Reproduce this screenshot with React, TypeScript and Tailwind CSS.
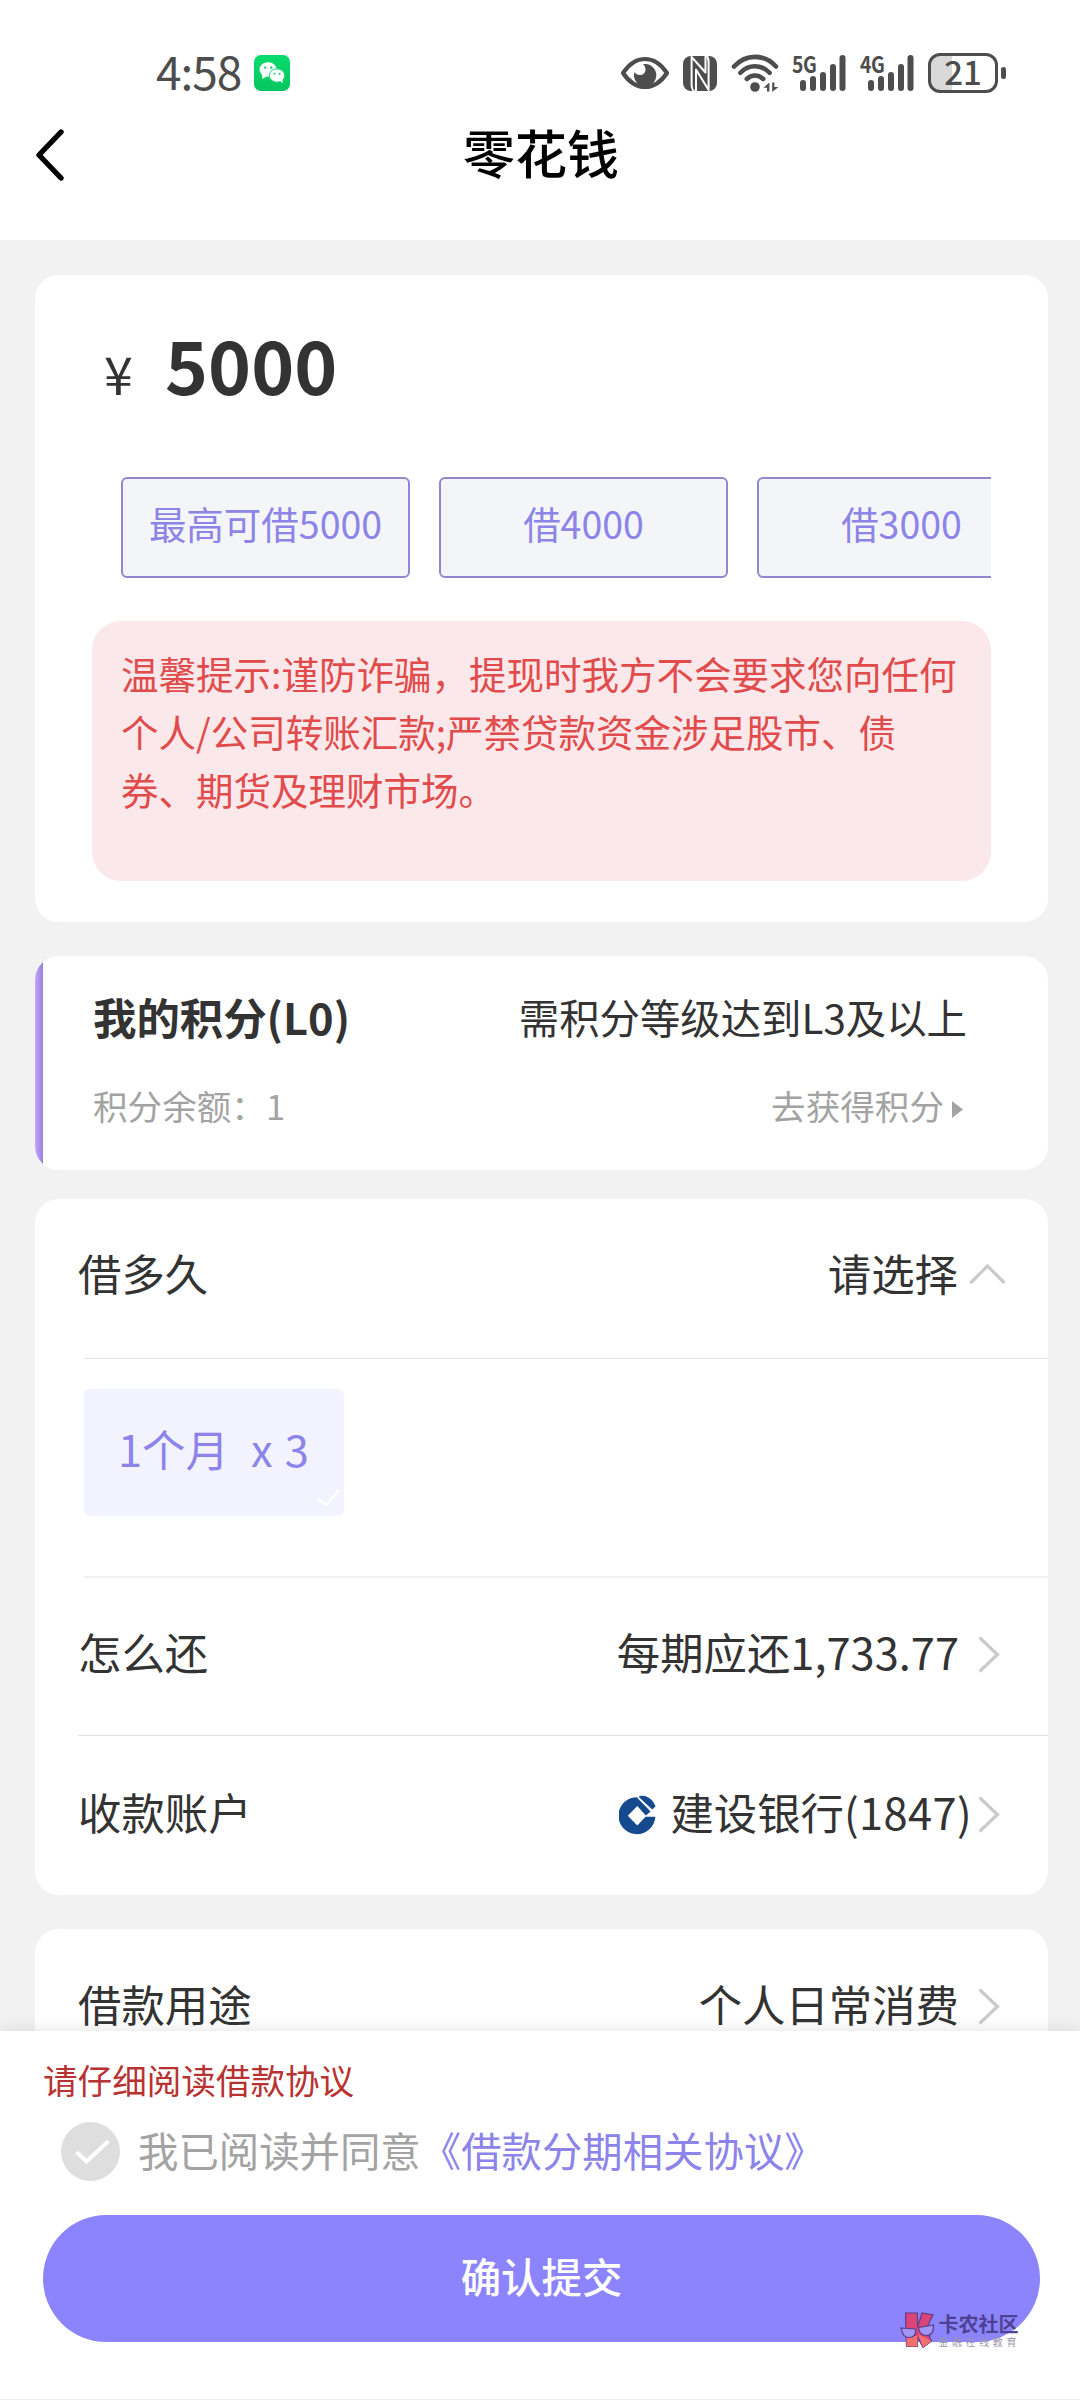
import type { ReactNode } from "react";

type RowProps = {
  label: string;
  children: ReactNode;
};

const amounts = ["最高可借5000", "借4000", "借3000"];

const signals = [
  { name: "5G", id: "sim1" },
  { name: "4G", id: "sim2" },
];

function WechatIcon() {
  return (
    <svg className="h-9 w-9" viewBox="0 0 36 36">
      <defs>
        <linearGradient id="wechat" x1="0" x2="0" y1="0" y2="1">
          <stop offset="0" stopColor="#06dc6c" />
          <stop offset="1" stopColor="#06c560" />
        </linearGradient>
      </defs>
      <rect fill="url(#wechat)" height="36" rx="7" width="36" />
      <path d="M8 19 L8.5 24 L13 21 Z" fill="#fff" />
      <ellipse cx="14" cy="14.5" fill="#fff" rx="8.5" ry="7.3" />
      <ellipse cx="23" cy="20.5" fill="#fff" rx="7.8" ry="6.7" stroke="#06d066" strokeWidth="0.9" />
      <path d="M25 25 L28.6 28.3 L28.4 23.5 Z" fill="#fff" />
      <circle cx="11.2" cy="12.6" fill="#06d066" r="1.2" />
      <circle cx="17.2" cy="12.6" fill="#06d066" r="1.2" />
      <circle cx="20.4" cy="18.8" fill="#06d066" r="1" />
      <circle cx="25.6" cy="18.8" fill="#06d066" r="1" />
    </svg>
  );
}

function EyeIcon() {
  return (
    <svg className="h-[34px] w-12" viewBox="0 0 48 34">
      <path
        d="M2 17 C8 8 15 3 24 3 C33 3 40 8 46 17 C40 26 33 31 24 31 C15 31 8 26 2 17 Z"
        fill="none"
        stroke="#4d4d4d"
        strokeLinejoin="round"
        strokeWidth="4.2"
      />
      <path
        d="M22 8.2 A11.2 11.2 0 1 1 13.4 16 C15 18.5 18.5 20 21.6 18.4 C25.5 16.4 25.4 11 22 8.2 Z"
        fill="#4d4d4d"
      />
    </svg>
  );
}

function NfcIcon() {
  return (
    <svg className="h-[35px] w-[34px]" viewBox="0 0 34 35">
      <rect fill="#4d4d4d" height="35" rx="8" width="34" />
      <g fill="none" stroke="#fff" strokeLinejoin="round" strokeWidth="2">
        <path d="M12 36 Q8.6 34 8.6 29 V1 L22.5 16.5 V-1" />
        <path d="M23 -1 Q25.6 1 25.6 6 V34 L13 13.5 V36" />
      </g>
    </svg>
  );
}

function WifiIcon() {
  return (
    <svg className="h-[38px] w-12" viewBox="0 0 48 38">
      <g fill="none" stroke="#4d4d4d" strokeLinecap="round" strokeWidth="4.6">
        <path d="M3 12.5 C15 -0.4 33 -0.4 45 12.5" />
        <path d="M9.4 18.8 C17.5 10 30.5 10 38.6 18.8" />
        <path d="M15.8 25 C20.5 20.4 27.5 20.4 32.2 25" />
      </g>
      <circle cx="24" cy="33" fill="#4d4d4d" r="4.8" />
      <path d="M32.5 33.8 L38.4 28.5 V37.5 H36 V33.8 Z M47.5 33 L41.2 38 V28.5 H43.4 V33 Z" fill="#4d4d4d" />
    </svg>
  );
}

function SignalIcon({ name }: { name: string }) {
  return (
    <div className="relative h-[38px] w-[54px]">
      <svg className="h-[38px] w-[54px]" viewBox="0 0 54 38">
        <g fill="#4d4d4d">
          <rect height="11" rx="3" width="6" x="8" y="26" />
          <rect height="15" rx="3" width="6" x="18" y="22" />
          <rect height="19" rx="3" width="6" x="28" y="18" />
          <rect height="27" rx="3" width="6" x="38" y="10" />
          <rect height="36" rx="3" width="6" x="47.5" y="1" />
        </g>
      </svg>
      <span className="absolute -top-[3px] left-0 origin-left scale-x-[0.84] text-[23px] leading-6 font-bold tracking-[-0.5px]">
        {name}
      </span>
    </div>
  );
}

function BatteryIcon() {
  return (
    <div className="flex items-center gap-[3px]">
      <div className="flex h-10 w-[70px] items-center justify-center rounded-xl border-[3px] border-[#4d4d4d] bg-linear-to-r from-[#d9d9d9] from-33% to-white to-33% text-[33px] leading-none font-medium">
        <span className="-mt-1">21</span>
      </div>
      <div className="h-3 w-[5px] rounded-full bg-[#4d4d4d]" />
    </div>
  );
}

function BankLogo() {
  return (
    <svg className="h-10 w-[37px]" viewBox="0 0 37 40">
      <path
        d="M36.4 21.8 A18.5 18.5 0 1 1 19.5 2.2 L31.6 16.4 L26.8 20.4 L18.3 11 L8.8 20.7 L18.3 30.4 L26.6 21.8 Z"
        fill="#154a8f"
      />
      <path d="M19.2 2 Q21 0.4 26 1 Q33 3 36.6 11.2 L33.4 14.6 Z" fill="#154a8f" />
      <path d="M18.8 2.2 L32.8 16.4" stroke="#fff" strokeWidth="1.8" />
    </svg>
  );
}

function ChevronRight() {
  return (
    <svg className="h-[37px] w-[22px]" viewBox="0 0 22 37">
      <path d="M1.5 1.5 L19.5 18.5 L1.5 35.5" fill="none" stroke="#cbcbcb" strokeWidth="3.2" />
    </svg>
  );
}

function Row({ label, children }: RowProps) {
  return (
    <div className="flex flex-1 items-center justify-between pr-12 pl-[43px] text-[43.4px] leading-none">
      <span className="pb-1.5">{label}</span>
      <div className="flex items-center">{children}</div>
    </div>
  );
}

function StatusBar() {
  return (
    <div className="flex h-[98px] items-start justify-between pt-[53px] pr-[74px] pl-[156px] text-[#4d4d4d]">
      <div className="flex h-10 items-center">
        <span className="w-[98px] pb-1.5 text-[46px] leading-none tracking-[-1px]">4:58</span>
        <WechatIcon />
      </div>
      <div className="flex h-10 items-center">
        <EyeIcon />
        <div className="ml-[14px] flex items-center">
          <NfcIcon />
        </div>
        <div className="ml-[14px] flex items-center">
          <WifiIcon />
        </div>
        <div className="ml-[13px] flex gap-[14px]">
          {signals.map((signal) => (
            <SignalIcon key={signal.id} name={signal.name} />
          ))}
        </div>
        <div className="ml-[14px]">
          <BatteryIcon />
        </div>
      </div>
    </div>
  );
}

function AmountCard() {
  return (
    <section className="h-[647px] rounded-3xl bg-white pr-[57px] pl-[57px]">
      <div className="flex h-[202px] items-baseline pt-[52px] pl-3">
        <span className="w-[61px] text-[52px] leading-none">¥</span>
        <span className="text-[73px] leading-none font-bold">5000</span>
      </div>
      <div className="flex gap-[29px] overflow-hidden pl-[29px]">
        {amounts.map((amount) => (
          <button
            className="h-[101px] w-[289px] shrink-0 rounded-md border-2 border-[#8f88cf] bg-[#f4f5f9] pb-2.5 text-[37.5px] leading-none text-[#8c84e6]"
            key={amount}
            type="button"
          >
            {amount}
          </button>
        ))}
      </div>
      <div className="mt-[43px] h-[260px] rounded-[29px] bg-[#fbe8ea] pt-[23px] pl-[29px] text-[37.5px] leading-[58px] whitespace-nowrap text-[#e14b4b]">
        温馨提示:谨防诈骗，提现时我方不会要求您向任何
        <br />
        个人/公司转账汇款;严禁贷款资金涉足股市、债
        <br />
        券、期货及理财市场。
      </div>
    </section>
  );
}

function PointsCard() {
  return (
    <section className="mt-[34px] flex h-[214px] overflow-hidden rounded-3xl bg-white">
      <div className="w-2 bg-linear-to-r from-[#c8a5fa] to-[#9580dd]" />
      <div className="flex flex-1 flex-col pt-[33px] pr-[81px] pl-[50px]">
        <div className="flex h-14 items-center justify-between leading-none">
          <span className="text-[43.4px] font-bold">我的积分(L0)</span>
          <span className="text-[40.4px]">需积分等级达到L3及以上</span>
        </div>
        <div className="mt-8 flex h-14 items-center justify-between text-[34.6px] leading-none text-[#a3a3a3]">
          <span>积分余额：1</span>
          <span className="flex items-center pr-1">
            去获得积分
            <svg className="mt-2 ml-2 h-[17px] w-[11px]" viewBox="0 0 11 17">
              <path d="M0 0 L11 8.5 L0 17 Z" fill="#a3a3a3" />
            </svg>
          </span>
        </div>
      </div>
    </section>
  );
}

function LoanCard() {
  return (
    <section className="mt-[29px] flex h-[696px] flex-col rounded-3xl bg-white">
      <div className="flex h-[159px] pb-[6px]">
        <Row label="借多久">
          <span className="pb-1.5">请选择</span>
          <svg className="mr-[-6px] mb-1 ml-[11px] h-[22px] w-[37px]" viewBox="0 0 37 22">
            <path d="M1.5 20 L18.5 3 L35.5 20" fill="none" stroke="#cbcbcb" strokeWidth="3.2" />
          </svg>
        </Row>
      </div>
      <div className="ml-[49px] h-[220px] border-t border-b-2 border-t-[#e2e2e2] border-b-[#f1f1f1] pt-[30px]">
        <div className="relative flex h-[127px] w-[260px] items-center rounded-md bg-[#f3f2ff] pl-[34px] text-[43.4px] leading-none text-[#8c84e8]">
          <span className="w-[133px] pb-[7px]">1个月</span>
          <span className="pb-[7px] tracking-[1.2px] whitespace-pre">x 3</span>
          <svg className="absolute right-1 bottom-2 h-5 w-6" viewBox="0 0 24 20">
            <path d="M1 10 L10 17 L23 2" fill="none" stroke="#fff" strokeWidth="2.6" />
          </svg>
        </div>
      </div>
      <div className="flex h-[157px] pb-1">
        <Row label="怎么还">
          <span className="mr-[19px] pb-1.5">每期应还1,733.77</span>
          <ChevronRight />
        </Row>
      </div>
      <div className="ml-[43px] h-px bg-[#e2e2e2]" />
      <div className="flex h-[159px] pb-0.5">
        <Row label="收款账户">
          <BankLogo />
          <span className="mr-1.5 ml-[14px] pb-1.5">
            建设银行<span className="tracking-[0.4px]">(1847)</span>
          </span>
          <ChevronRight />
        </Row>
      </div>
    </section>
  );
}

// Watermark of the forum, laid over the bottom right of the submit button
function Watermark() {
  return (
    <div className="absolute right-[60px] bottom-[51px] flex gap-[3px]">
      <svg className="h-9 w-[35px]" viewBox="0 0 35 36">
        <g stroke="#5b3f86" strokeWidth="1.2">
          <path d="M5.5 1 H17.5 V15 L22 1 L33 3 L26 17 L31.5 29 L23 35.4 L17.5 25 V34.5 H6.5 Z" fill="#dc4479" />
          <path d="M6.5 24 H17.5 V34.5 H6.5 Z M18 22 L31.5 29 L23 35.4 Z" fill="#f0706f" stroke="none" />
          <path d="M0.8 16 L15.5 17 Q16.5 25.5 9 25.5 Q2.5 25.5 1.6 17 Z" fill="#a195f6" />
          <path d="M18.5 15.5 L33.5 13 Q34 23.5 26.5 23.5 Q19.5 23.5 18.5 15.5 Z" fill="#a195f6" />
        </g>
      </svg>
      <div className="pt-0.5">
        <div className="text-[20px] leading-[20px] font-bold text-[#4d4292]">卡农社区</div>
        <div className="mt-[2px] text-[10px] leading-[12px] tracking-[3.6px] text-[#9a96ac]">金融在线教育</div>
      </div>
    </div>
  );
}

export default function App() {
  return (
    <main className="flex h-[2400px] w-[1080px] flex-col overflow-hidden bg-[#f2f2f2] font-['Noto_Sans_CJK_SC',sans-serif] text-[#333]">
      <header className="h-60 shrink-0 bg-white">
        <StatusBar />
        <div className="grid h-[114px] grid-cols-[1fr_auto_1fr] items-center text-black">
          <svg className="ml-[35px] h-[52px] w-8" viewBox="0 0 32 52">
            <path
              d="M26 3 L4 26 L26 49"
              fill="none"
              stroke="#000"
              strokeLinecap="round"
              strokeLinejoin="round"
              strokeWidth="5.4"
            />
          </svg>
          <h1 className="pb-[7px] pl-0.5 text-[52px] leading-none font-medium">零花钱</h1>
        </div>
      </header>

      <div className="h-[1791px] shrink-0 overflow-hidden pt-[35px] pr-8 pl-[35px]">
        <AmountCard />
        <PointsCard />
        <LoanCard />
        <section className="mt-[34px] flex h-[157px] rounded-3xl bg-white pb-0.5">
          <Row label="借款用途">
            <span className="mr-[19px] pb-1.5">个人日常消费</span>
            <ChevronRight />
          </Row>
        </section>
      </div>

      <footer className="relative flex-1 border-b border-[#ececec] bg-white px-10 pt-[24px] pl-[43px] shadow-[0_0_16px_rgba(0,0,0,0.12)]">
        <p className="flex h-12 items-center text-[34.6px] leading-none text-[#b93232]">请仔细阅读借款协议</p>
        <div className="mt-[19px] flex h-[59px] items-center pl-[18px] text-[40.4px] leading-none">
          <svg className="h-[59px] w-[59px]" viewBox="0 0 59 59">
            <circle cx="29.5" cy="29.5" fill="#dedede" r="29.5" />
            <path d="M15.5 30 L25.5 39.5 L47.5 19" fill="none" stroke="#fff" strokeWidth="4" />
          </svg>
          <span className="ml-[18px] pb-0.5 text-[#a3a3a3]">我已阅读并同意</span>
          <span className="pb-0.5 text-[#8c84ea]">《借款分期相关协议》</span>
        </div>
        <button
          className="mt-[34px] flex h-[127px] w-full items-center justify-center rounded-full bg-[#8c84fc] pb-[5px] text-[40.4px] leading-none font-medium text-white"
          type="button"
        >
          确认提交
        </button>
        <Watermark />
      </footer>
    </main>
  );
}
